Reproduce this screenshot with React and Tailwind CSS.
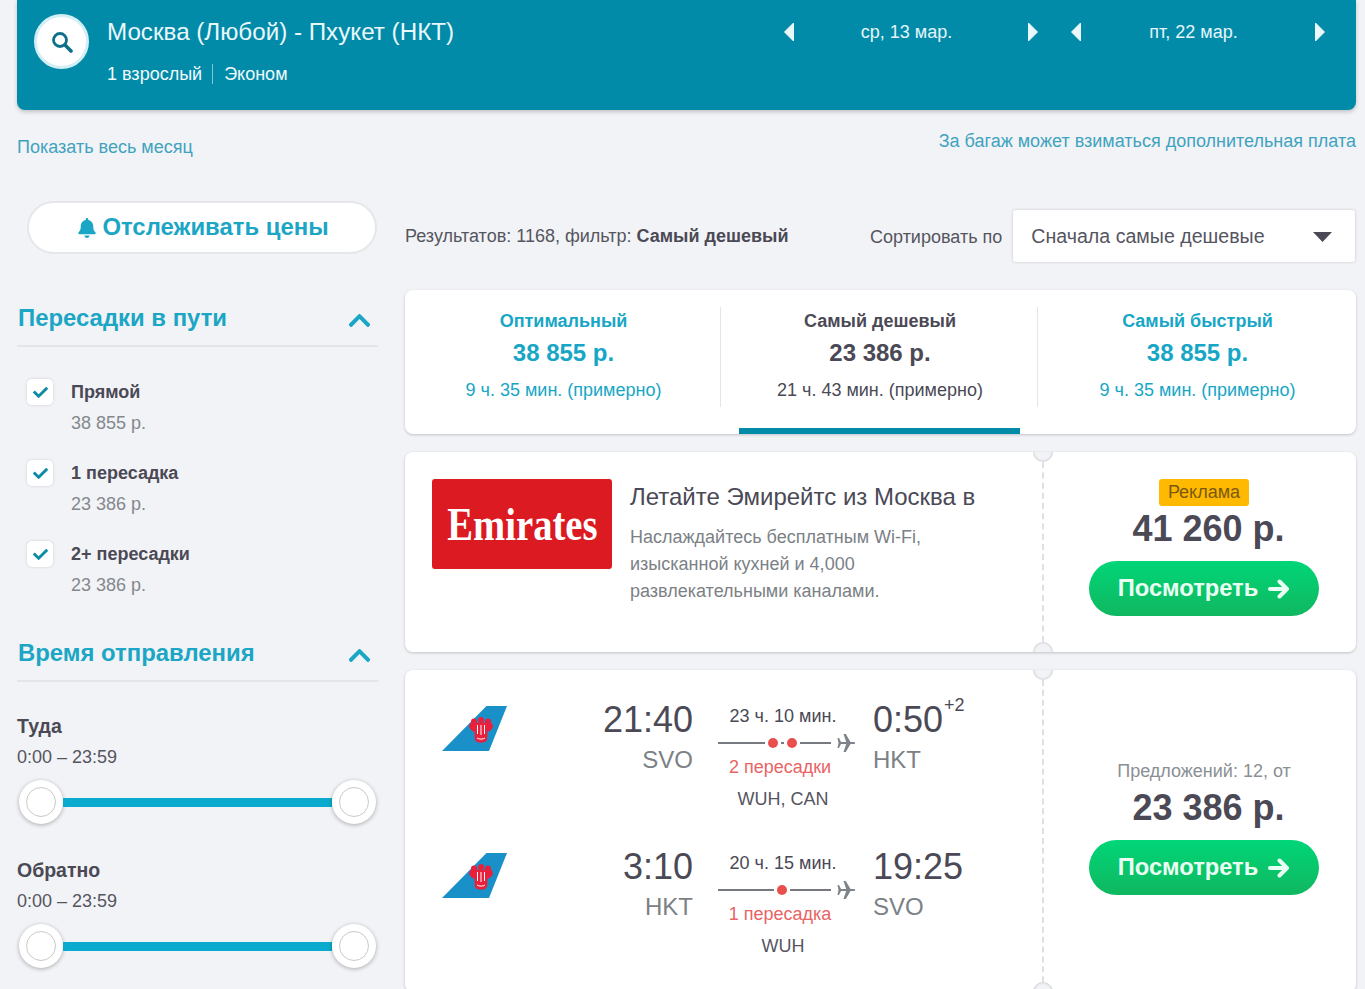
import React from "react";
import { FaBell, FaCheck, FaChevronUp } from "react-icons/fa";

const stops = [
  { label: "Прямой", price: "38 855 р." },
  { label: "1 пересадка", price: "23 386 р." },
  { label: "2+ пересадки", price: "23 386 р." },
];

const tabs = [
  { title: "Оптимальный", price: "38 855 р.", time: "9 ч. 35 мин. (примерно)" },
  { title: "Самый дешевый", price: "23 386 р.", time: "21 ч. 43 мин. (примерно)", active: true },
  { title: "Самый быстрый", price: "38 855 р.", time: "9 ч. 35 мин. (примерно)" },
];

function Caret({ dir }) {
  return (
    <svg width="10" height="18" viewBox="0 0 10 18" className="shrink-0">
      <polygon
        points={dir === "left" ? "9.5,0 9.5,18 0.5,9" : "0.5,0 0.5,18 9.5,9"}
        fill="#eaf8fb"
        stroke="#eaf8fb"
        strokeLinejoin="round"
      />
    </svg>
  );
}

function DatePicker({ label, className }) {
  return (
    <div className={`flex items-center justify-between ${className}`}>
      <Caret dir="left" />
      <span className="mr-[9px] text-[18px] text-[#e4f6fa]">{label}</span>
      <Caret dir="right" />
    </div>
  );
}

function SectionTitle({ children }) {
  return (
    <div className="flex items-center justify-between border-b-2 border-[#e4e5e9] pb-[12px] pl-px pr-[6px]">
      <span className="text-[23.9px] font-bold leading-[30px] text-[#1ba6c5]">{children}</span>
      <FaChevronUp className="mt-[4px] text-[25px] text-[#1ba6c5]" />
    </div>
  );
}

function Thumb() {
  return (
    <div className="flex h-[44px] w-[44px] shrink-0 items-center justify-center rounded-full bg-white shadow-[0_1px_4px_rgba(0,0,0,0.3)]">
      <div className="h-[30px] w-[30px] rounded-full border border-[#c9c9c9] bg-white" />
    </div>
  );
}

function TimeRange({ label, className }) {
  return (
    <div className={className}>
      <div className="text-[19.5px] font-bold leading-[26px] text-[#4a4955]">{label}</div>
      <div className="mt-[5px] text-[18px] leading-[26px] text-[#55555f]">0:00 – 23:59</div>
      <div className="mt-[10px] flex w-[359px] items-center pl-[2px]">
        <Thumb />
        <div className="h-[9px] flex-1 bg-[#0aabcf]" />
        <Thumb />
      </div>
    </div>
  );
}

function Notch({ bottom }) {
  return (
    <div
      className={`absolute left-[-11px] h-[20px] w-[20px] rounded-full bg-[#f2f3f6] shadow-[inset_0_0_3px_rgba(0,0,0,0.25)] ${
        bottom ? "bottom-[-10px]" : "top-[-10px]"
      }`}
    />
  );
}

function ViewButton() {
  return (
    <button className="flex h-[55px] w-[230px] items-center justify-center gap-[10px] rounded-full bg-gradient-to-b from-[#00d678] to-[#0fb760] text-[23.7px] font-bold text-[#eafff4]">
      Посмотреть
      <svg width="22" height="20" viewBox="0 0 22 20">
        <path d="M2 10H19M11.500 2.500L19 10L11.500 17.500" stroke="#eafff4" strokeWidth="4" fill="none" strokeLinecap="round" strokeLinejoin="round" />
      </svg>
    </button>
  );
}

function TailLogo() {
  return (
    <svg width="65" height="45" viewBox="0 0 65 45" className="mt-[6px] shrink-0">
      <polygon points="44.5,0 65,0 47,45 0,45" fill="#1a90c8" />
      <g fill="#e8203c">
        <circle cx="32" cy="15.500" r="3" />
        <circle cx="39" cy="14" r="3" />
        <circle cx="46" cy="15.500" r="3" />
        <path d="M27 20C27.500 17 30 15.500 33 16.500H45C48 15.500 50.500 17 51 20C50.500 23.500 47.500 25.500 45.500 25.500C45.500 28 45.500 31 45 34C43 37.500 35 37.500 33 34C32.500 31 32.500 28 32.500 25.500C30.500 25.500 27.500 23.500 27 20Z" />
      </g>
      <path d="M35.500 19V28M39 19V29M42.500 19V28M35 32C37 33.500 41 33.500 43 32" stroke="#fff" strokeWidth="1" fill="none" />
    </svg>
  );
}

function PlaneMark() {
  return (
    <svg width="19" height="20" viewBox="0 0 19 20" className="ml-[6px] shrink-0">
      <path
        d="M0.500 5L2 5L4 8.900L9.200 8.900L6.500 1L8.800 1L13.500 8.900L17.500 8.900Q19 10 17.500 11.100L13.500 11.100L8.800 19L6.500 19L9.200 11.100L4 11.100L2 15L0.500 15L1.500 10Z"
        fill="#7d8388"
      />
    </svg>
  );
}

function Leg({ depTime, depCode, arrTime, arrCode, plus, duration, dots, leftLine, stopsLabel, route }) {
  return (
    <div className="flex h-[147px] items-start pl-[37px]">
      <TailLogo />
      <div className="w-[186px] shrink-0 text-right">
        <div className="text-[36px] leading-[40px] text-[#4a4955]">{depTime}</div>
        <div className="mt-[5px] text-[24px] leading-[30px] text-[#7b8186]">{depCode}</div>
      </div>
      <div className="ml-[25px] w-[130px] shrink-0 pt-[3px] text-center">
        <div className="text-[18px] leading-[26px] text-[#4a4955]">{duration}</div>
        <div className="mt-[4px] flex h-[20px] w-[138px] items-center">
          <div className="flex w-[114px] items-center">
            <div className={`h-[2.5px] shrink-0 bg-[#76797d] ${leftLine}`} />
            {dots.map((d, i) => (
              <React.Fragment key={d}>
                <div className="mx-[3px] h-[10px] w-[10px] shrink-0 rounded-full bg-[#e8504e]" />
                {i < dots.length - 1 && <div className="h-[2.5px] w-[3px] shrink-0 bg-[#76797d]" />}
              </React.Fragment>
            ))}
            <div className="h-[2.5px] flex-1 bg-[#76797d]" />
          </div>
          <PlaneMark />
        </div>
        <div className="mt-[1px] pr-[6px] text-[18px] leading-[26px] text-[#e96464]">{stopsLabel}</div>
        <div className="mt-[6px] text-[18px] leading-[26px] text-[#55555f]">{route}</div>
      </div>
      <div className="ml-[25px]">
        <div className="relative text-[36px] leading-[40px] text-[#4a4955]">
          {arrTime}
          {plus && (
            <span className="absolute left-[71px] top-[-8px] text-[18px] leading-[26px]">{plus}</span>
          )}
        </div>
        <div className="mt-[5px] text-[24px] leading-[30px] text-[#7b8186]">{arrCode}</div>
      </div>
    </div>
  );
}

export default function App() {
  return (
    <div className="h-[989px] w-[1365px] overflow-hidden bg-[#f2f3f6] pl-[17px] pr-[9px] font-['Liberation_Sans',Arial,sans-serif]">
      <header className="flex h-[110px] rounded-b-[8px] bg-[#028ba9] shadow-[0_2px_4px_rgba(0,0,0,0.2)]">
        <div className="ml-[17px] mt-[14px] flex h-[55px] w-[55px] shrink-0 items-center justify-center rounded-full border-[3px] border-[#d3eef5] bg-white">
          <svg width="22" height="22" viewBox="0 0 22 22">
            <circle cx="9" cy="9" r="6.500" stroke="#0e7088" strokeWidth="2.800" fill="none" />
            <path d="M14 14L20 20" stroke="#0e7088" strokeWidth="3.600" strokeLinecap="round" />
          </svg>
        </div>
        <div className="ml-[18px] w-[677px] shrink-0">
          <div className="mt-[17px] text-[24.2px] leading-[30px] text-[#eaf8fb]">Москва (Любой) - Пхукет (НКТ)</div>
          <div className="mt-[17px] flex items-center text-[18px] leading-[20px] text-[#f0fafc]">
            <span>1 взрослый</span>
            <span className="ml-[10px] mr-[11px] h-[20px] w-px bg-[#7cc7d8]" />
            <span>Эконом</span>
          </div>
        </div>
        <DatePicker label="ср, 13 мар." className="mt-[23px] h-[18px] w-[254px] shrink-0 self-start" />
        <DatePicker label="пт, 22 мар." className="ml-[33px] mt-[23px] h-[18px] w-[254px] shrink-0 self-start" />
      </header>

      <div className="flex h-[91px] items-start justify-between text-[18px] text-[#3fa3bf]">
        <span className="mt-[24px] leading-[26px]">Показать весь месяц</span>
        <span className="mt-[18px] leading-[26px]">За багаж может взиматься дополнительная плата</span>
      </div>

      <div className="flex gap-[27px]">
        <aside className="w-[361px] shrink-0">
          <button className="ml-[10px] flex h-[53px] w-[350px] items-center justify-center gap-[5px] rounded-full border-2 border-[#e6e7ea] bg-white pb-[2px] pl-[2px] text-[23.9px] font-bold text-[#1ba6c5]">
            <FaBell className="mt-[2px] text-[20px]" />
            Отслеживать цены
          </button>

          <div className="mt-[49px]">
            <SectionTitle>Пересадки в пути</SectionTitle>
          </div>
          <div className="mt-[32px] flex flex-col gap-[24px]">
            {stops.map((s) => (
              <div key={s.label} className="flex">
                <div className="ml-[10px] flex h-[26px] w-[26px] shrink-0 items-center justify-center rounded-[5px] bg-white shadow-[0_0_3px_rgba(0,0,0,0.15)]">
                  <FaCheck className="text-[15px] text-[#0d8ba6]" />
                </div>
                <div className="ml-[18px]">
                  <div className="text-[18px] font-bold leading-[26px] text-[#4a4955]">{s.label}</div>
                  <div className="mt-[5px] text-[18px] leading-[26px] text-[#84888d]">{s.price}</div>
                </div>
              </div>
            ))}
          </div>

          <div className="mt-[40px]">
            <SectionTitle>Время отправления</SectionTitle>
          </div>
          <TimeRange label="Туда" className="mt-[31px]" />
          <TimeRange label="Обратно" className="mt-[33px]" />
        </aside>

        <main className="w-[951px] shrink-0 pt-[9px]">
          <div className="flex h-[52px] items-center">
            <span className="mt-[1px] w-[465px] text-[18px] text-[#55555f]">
              Результатов: 1168, фильтр: <b className="text-[#4a4955]">Самый дешевый</b>
            </span>
            <span className="mt-[2px] text-[18px] text-[#55555f]">Сортировать по</span>
            <div className="ml-[11px] mr-px flex h-[52px] flex-1 items-center justify-between rounded-[3px] bg-white pl-[18px] pr-[23px] pt-[2px] text-[19.6px] text-[#55555f] shadow-[0_0_3px_rgba(0,0,0,0.2)]">
              Сначала самые дешевые
              <svg width="19" height="10" viewBox="0 0 19 10">
                <polygon points="0,0 19,0 9.500,10" fill="#4a4955" />
              </svg>
            </div>
          </div>

          <div className="mt-[28px] grid h-[144px] grid-cols-[315px_317px_319px] rounded-[8px] bg-white shadow-[0_1px_3px_rgba(0,0,0,0.2)]">
            {tabs.map((t, i) => (
              <div
                key={t.title}
                className={`relative pt-[18px] text-center ${i === 1 ? "pl-[3px] text-[#4a4955]" : "pl-[2px] text-[#17a6c6]"}`}
              >
                {i > 0 && <div className="absolute left-0 top-[17px] h-[100px] w-px bg-[#e4e5e9]" />}
                <div className="text-[18px] font-bold leading-[26px]">{t.title}</div>
                <div className="mt-[3px] text-[24px] font-bold leading-[32px]">{t.price}</div>
                <div className="mt-[8px] text-[18px] leading-[26px]">{t.time}</div>
                {t.active && <div className="absolute bottom-0 left-[19px] h-[6px] w-[281px] bg-[#028ba9]" />}
              </div>
            ))}
          </div>

          <div className="mt-[18px] flex h-[200px] overflow-hidden rounded-[8px] bg-white shadow-[0_1px_3px_rgba(0,0,0,0.2)]">
            <div className="flex w-[637px] shrink-0 pl-[27px] pt-[27px]">
              <div className="flex h-[90px] w-[180px] shrink-0 items-center justify-center overflow-hidden rounded-[3px] bg-[#dc1a22] font-['Liberation_Serif',serif] text-[46px] font-bold text-white">
                <span className="scale-x-[0.84]">Emirates</span>
              </div>
              <div className="ml-[18px]">
                <div className="text-[24px] leading-[36px] text-[#4a4955]">Летайте Эмирейтс из Москва в</div>
                <div className="mt-[9px] text-[18px] leading-[27px] text-[#7b8186]">
                  Наслаждайтесь бесплатным Wi-Fi,
                  <br />
                  изысканной кухней и 4,000
                  <br />
                  развлекательными каналами.
                </div>
              </div>
            </div>
            <div className="relative flex flex-1 flex-col items-center border-l-2 border-dashed border-[#dfe0e4] pl-[8px] pt-[27px]">
              <Notch />
              <Notch bottom />
              <div className="flex h-[27px] w-[90px] items-center justify-center rounded-[3px] bg-[#ffb900] text-[18px] text-[#7a5a10]">
                Реклама
              </div>
              <div className="ml-[9px] mt-[2px] text-[36px] font-bold leading-[42px] text-[#4a4955]">41 260 р.</div>
              <div className="mt-[11px]">
                <ViewButton />
              </div>
            </div>
          </div>

          <div className="mt-[18px] flex h-[322px] overflow-hidden rounded-[8px] bg-white shadow-[0_1px_3px_rgba(0,0,0,0.2)]">
            <div className="w-[637px] shrink-0 pt-[30px]">
              <Leg
                depTime="21:40"
                depCode="SVO"
                arrTime="0:50"
                arrCode="HKT"
                plus="+2"
                duration="23 ч. 10 мин."
                dots={["a", "b"]}
                leftLine="w-[47px]"
                stopsLabel="2 пересадки"
                route="WUH, CAN"
              />
              <Leg
                depTime="3:10"
                depCode="HKT"
                arrTime="19:25"
                arrCode="SVO"
                duration="20 ч. 15 мин."
                dots={["a"]}
                leftLine="w-[56px]"
                stopsLabel="1 пересадка"
                route="WUH"
              />
            </div>
            <div className="relative flex flex-1 flex-col items-center border-l-2 border-dashed border-[#dfe0e4] pl-[8px] pt-[88px]">
              <Notch />
              <Notch bottom />
              <div className="text-[18px] leading-[26px] text-[#8a8f94]">Предложений: 12, от</div>
              <div className="ml-[9px] mt-[3px] text-[36px] font-bold leading-[42px] text-[#4a4955]">23 386 р.</div>
              <div className="mt-[11px]">
                <ViewButton />
              </div>
            </div>
          </div>
        </main>
      </div>
    </div>
  );
}
